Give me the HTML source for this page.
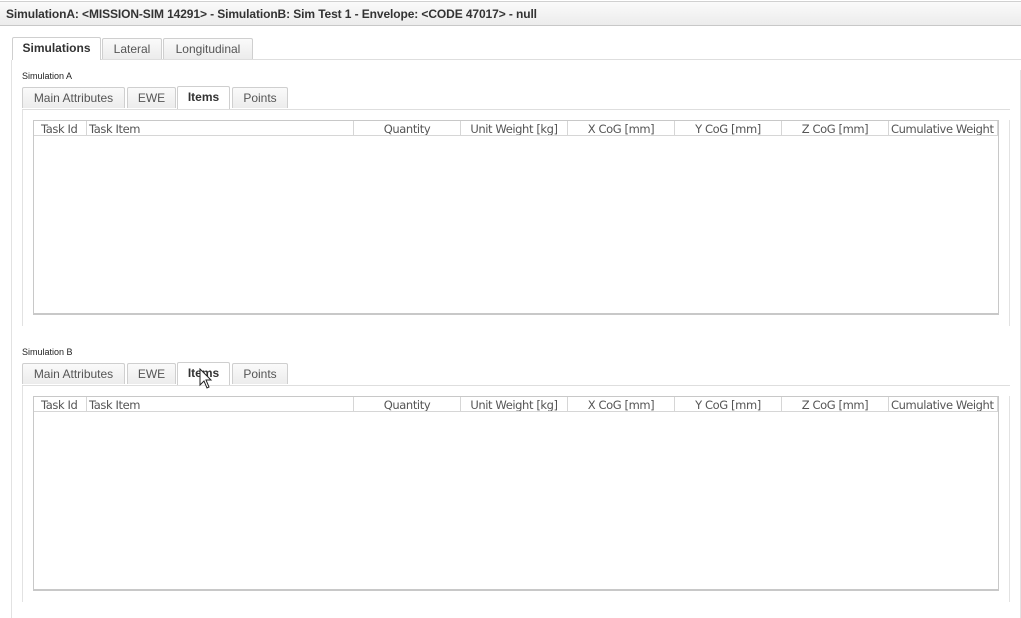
<!DOCTYPE html>
<html><head><style>
body{margin:0;width:1021px;height:618px;background:#fff;position:relative;overflow:hidden;font-family:"Liberation Sans",Arial,sans-serif;}
.a{position:absolute;}
.title{left:0;top:1px;width:1021px;height:25px;border-top:1px solid #d0d0d0;border-bottom:1px solid #c8c8c8;background:linear-gradient(#fafafa,#ececec);box-sizing:border-box;font-size:12px;font-weight:bold;color:#333;line-height:24px;padding-left:6px;letter-spacing:-0.1px;}
.tab{position:absolute;height:21px;border:1px solid #cfcfcf;border-bottom:none;background:linear-gradient(#fafafa,#ececec);box-sizing:border-box;font-size:12px;color:#555;text-align:center;line-height:20px;border-radius:2px 2px 0 0;}
.tab.sel{background:#fff;color:#333;font-weight:bold;height:23px;}
.hl{position:absolute;height:1px;background:#dedede;}
.vl{position:absolute;width:1px;background:#e2e2e2;}
.lbl{position:absolute;font-size:9px;color:#222;}
.tbl{position:absolute;left:33px;width:966px;height:195px;border:1px solid #c8c8c8;border-bottom:2px solid #c8c8c8;box-sizing:border-box;}
.hd{position:absolute;top:0;height:15px;border-bottom:1px solid #d6d6d6;border-right:1px solid #d6d6d6;box-sizing:border-box;font-family:"DejaVu Sans",sans-serif;font-size:11.5px;color:#555;line-height:16px;white-space:nowrap;overflow:hidden;letter-spacing:-0.4px;}
</style></head><body>
<div class="a title">SimulationA: &lt;MISSION-SIM 14291&gt; - SimulationB: Sim Test 1 - Envelope: &lt;CODE 47017&gt; - null</div>

<div class="hl" style="left:12px;top:59px;width:1009px"></div>
<div class="tab sel" style="left:12px;top:37px;width:89px;">Simulations</div>
<div class="tab" style="left:102px;top:38px;width:60px;">Lateral</div>
<div class="tab" style="left:163px;top:38px;width:90px;">Longitudinal</div>
<div class="vl" style="left:11px;top:60px;height:558px"></div>
<div class="vl" style="left:1020px;top:70px;height:548px"></div>

<!-- Sim A -->
<div class="lbl" style="left:22px;top:71px">Simulation A</div>
<div class="hl" style="left:22px;top:109px;width:988px"></div>
<div class="tab" style="left:22px;top:87px;width:103px;">Main Attributes</div>
<div class="tab" style="left:127px;top:87px;width:49px;">EWE</div>
<div class="tab sel" style="left:177px;top:86px;width:53px;">Items</div>
<div class="tab" style="left:232px;top:87px;width:56px;">Points</div>
<div class="vl" style="left:22px;top:110px;height:216px"></div>
<div class="vl" style="left:1009px;top:120px;height:206px"></div>
<div class="tbl" style="top:120px">
<div class="hd" style="left:0;width:53px;padding-left:7px">Task Id</div>
<div class="hd" style="left:53px;width:267px;padding-left:2px">Task Item</div>
<div class="hd" style="left:320px;width:107px;text-align:center">Quantity</div>
<div class="hd" style="left:427px;width:107px;text-align:center">Unit Weight [kg]</div>
<div class="hd" style="left:534px;width:107px;text-align:center">X CoG [mm]</div>
<div class="hd" style="left:641px;width:107px;text-align:center">Y CoG [mm]</div>
<div class="hd" style="left:748px;width:107px;text-align:center">Z CoG [mm]</div>
<div class="hd" style="left:855px;width:109px;padding-left:2px">Cumulative Weight [</div>
</div>

<!-- Sim B -->
<div class="lbl" style="left:22px;top:347px">Simulation B</div>
<div class="hl" style="left:22px;top:385px;width:988px"></div>
<div class="tab" style="left:22px;top:363px;width:103px;">Main Attributes</div>
<div class="tab" style="left:127px;top:363px;width:49px;">EWE</div>
<div class="tab sel" style="left:177px;top:362px;width:53px;">Items</div>
<div class="tab" style="left:232px;top:363px;width:56px;">Points</div>
<div class="vl" style="left:22px;top:386px;height:216px"></div>
<div class="vl" style="left:1009px;top:396px;height:206px"></div>
<div class="tbl" style="top:396px">
<div class="hd" style="left:0;width:53px;padding-left:7px">Task Id</div>
<div class="hd" style="left:53px;width:267px;padding-left:2px">Task Item</div>
<div class="hd" style="left:320px;width:107px;text-align:center">Quantity</div>
<div class="hd" style="left:427px;width:107px;text-align:center">Unit Weight [kg]</div>
<div class="hd" style="left:534px;width:107px;text-align:center">X CoG [mm]</div>
<div class="hd" style="left:641px;width:107px;text-align:center">Y CoG [mm]</div>
<div class="hd" style="left:748px;width:107px;text-align:center">Z CoG [mm]</div>
<div class="hd" style="left:855px;width:109px;padding-left:2px">Cumulative Weight [</div>
</div>

<svg class="a" style="left:199px;top:368px" width="14" height="22" viewBox="0 0 14 22"><path d="M1 1 L1 17 L5 13 L8 20 L10 19 L7 12 L12 12 Z" fill="#fff" stroke="#222" stroke-width="1"/></svg>
</body></html>
